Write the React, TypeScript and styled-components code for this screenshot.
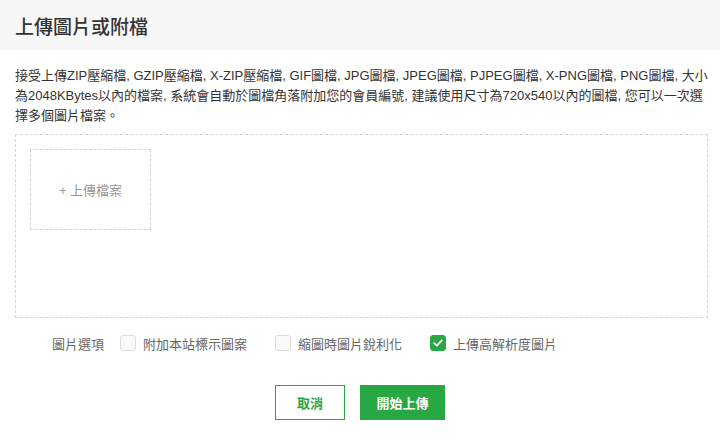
import React, { useState } from 'react';
import styled, { createGlobalStyle } from 'styled-components';

const GlobalStyle = createGlobalStyle`
  body {
    margin: 0;
    background: #ffffff;
    font-family: "Liberation Sans", "Noto Sans CJK TC", sans-serif;
    color: #333333;
  }
`;

const Header = styled.div`
  height: 50px;
  display: flex;
  align-items: center;
  padding-left: 15px;
  background-color: #f7f7f7;
`;
const Title = styled.h1`
  margin: 0;
  font-size: 19px;
  font-weight: 500;
  color: #333333;
`;
const Body = styled.div`
  padding: 16px 12px 0 15px;
`;
const Description = styled.p`
  margin: 0;
  font-size: 13px;
  line-height: 20px;
  color: #333333;
`;
const DropArea = styled.div`
  margin-top: 8px;
  height: 184px;
  box-sizing: border-box;
  border: 1px dashed #d6d6d6;
  padding: 14px;
`;
const UploadTile = styled.button`
  width: 121px;
  height: 81px;
  box-sizing: border-box;
  border: 1px dashed #d0d0d0;
  background: #ffffff;
  color: #999999;
  font-family: inherit;
  font-size: 13px;
  cursor: pointer;
`;
const OptionsRow = styled.div`
  display: flex;
  align-items: center;
  height: 20px;
  margin-top: 15px;
  padding-left: 37px;
  font-size: 13px;
  color: #666666;
`;
const OptionsLabel = styled.span`
  margin-right: 16px;
`;
const Option = styled.label`
  display: flex;
  align-items: center;
  gap: 7px;
  margin-right: 28px;
  cursor: pointer;
`;
const Box = styled.span<{ $checked: boolean }>`
  width: 16px;
  height: 16px;
  box-sizing: border-box;
  border-radius: 3px;
  border: 1px solid ${(p) => (p.$checked ? '#28a745' : '#dcdcdc')};
  background: ${(p) => (p.$checked ? '#28a745' : '#fafafa')};
  display: flex;
  align-items: center;
  justify-content: center;
`;
const Actions = styled.div`
  display: flex;
  justify-content: center;
  gap: 15px;
  margin-top: 32px;
  padding-right: 3px;
`;
const Button = styled.button<{ $primary?: boolean }>`
  height: 35px;
  width: ${(p) => (p.$primary ? '85px' : '70px')};
  padding: 0;
  box-sizing: border-box;
  font-family: inherit;
  font-size: 13px;
  font-weight: bold;
  cursor: pointer;
  border: 1px solid #28a745;
  background: ${(p) => (p.$primary ? '#28a745' : '#ffffff')};
  color: ${(p) => (p.$primary ? '#ffffff' : '#28a745')};
`;

const options = ['附加本站標示圖案', '縮圖時圖片銳利化', '上傳高解析度圖片'];

const App = () => {
  const [checked, setChecked] = useState<boolean[]>([false, false, true]);

  const toggle = (i: number) => {
    setChecked(checked.map((c, j) => (j === i ? !c : c)));
  };

  return (
    <>
      <GlobalStyle />
      <Header>
        <Title>上傳圖片或附檔</Title>
      </Header>
      <Body>
        <Description>
          接受上傳ZIP壓縮檔, GZIP壓縮檔, X-ZIP壓縮檔, GIF圖檔, JPG圖檔, JPEG圖檔, PJPEG圖檔, X-PNG圖檔, PNG圖檔, 大小為2048KBytes以內的檔案, 系統會自動於圖檔角落附加您的會員編號, 建議使用尺寸為720x540以內的圖檔, 您可以一次選擇多個圖片檔案。
        </Description>
        <DropArea>
          <UploadTile>+ 上傳檔案</UploadTile>
        </DropArea>
        <OptionsRow>
          <OptionsLabel>圖片選項</OptionsLabel>
          {options.map((label, i) => (
            <Option key={label} onClick={() => toggle(i)}>
              <Box $checked={checked[i]}>
                {checked[i] && (
                  <svg width="10" height="8" viewBox="0 0 10 8">
                    <path d="M1.2 4.2 L3.8 6.6 L8.8 1.4" fill="none" stroke="#ffffff" strokeWidth="1.8" strokeLinecap="round" strokeLinejoin="round" />
                  </svg>
                )}
              </Box>
              {label}
            </Option>
          ))}
        </OptionsRow>
        <Actions>
          <Button>取消</Button>
          <Button $primary>開始上傳</Button>
        </Actions>
      </Body>
    </>
  );
};

export default App;
